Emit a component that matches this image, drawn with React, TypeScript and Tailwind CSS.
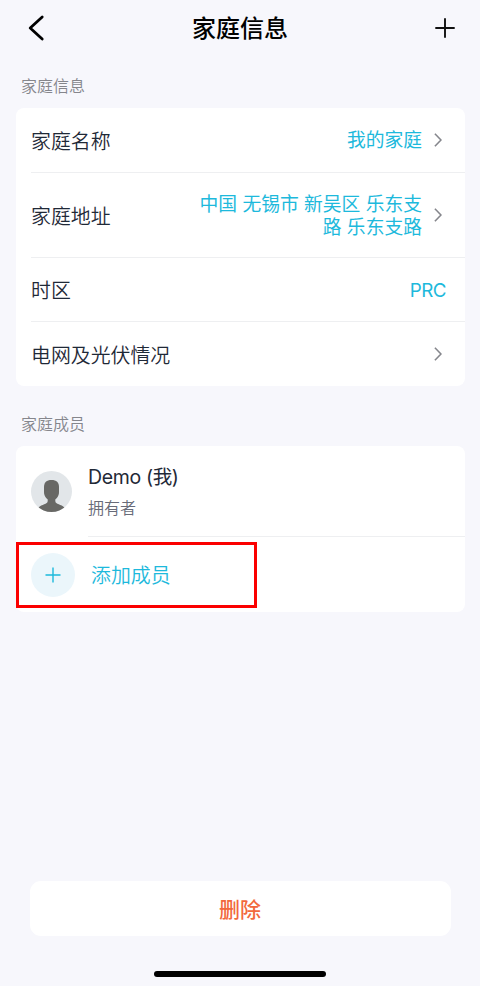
import React from 'react';

interface InfoRowProps {
  label: string;
  value?: string;
  arrow?: boolean;
  heightClass: string;
  last?: boolean;
}

const ChevronIcon = () => (
  <svg className="ml-3 shrink-0" width="8" height="14" viewBox="0 0 8 14" fill="none">
    <path d="M0.9 0.8L7 7L0.9 13.2" stroke="#85868c" strokeWidth="1.6" />
  </svg>
);

const AvatarIcon = () => (
  <svg className="shrink-0" width="41" height="41" viewBox="0 0 41 41">
    <defs>
      <clipPath id="avatar">
        <circle cx="20.5" cy="20.5" r="20.5" />
      </clipPath>
    </defs>
    <circle cx="20.5" cy="20.5" r="20.5" fill="#e2e6e9" />
    <g clipPath="url(#avatar)" fill="#686865">
      <path d="M20.5 9C25.5 9 28 11.5 28 16V21C28 25.500 24.800 29.500 20.500 29.500C16.200 29.500 13 25.500 13 21V16C13 11.500 15.500 9 20.500 9Z" />
      <path d="M16.700 25H24.300V30C24.300 33.500 30.500 33.200 33.500 36.500V41H7.500V36.500C10.500 33.200 16.700 33.500 16.700 30Z" />
    </g>
  </svg>
);

const SectionTitle = ({ children }: { children: React.ReactNode }) => (
  <h2 className="ml-[21px] text-base leading-6 font-[350] text-[#85868c]">{children}</h2>
);

const InfoRow = ({ label, value, arrow, heightClass, last }: InfoRowProps) => (
  <div
    className={`ml-[15px] flex items-center justify-between ${heightClass} ${last ? '' : 'border-b border-[#eeeff1]'}`}
  >
    <span className="pt-[5px] text-[19.9px] font-[350] text-[#1f2937]">{label}</span>
    <div className={`flex items-center ${arrow ? 'pr-[23px]' : 'pr-[19px] tracking-[-0.5px]'}`}>
      {value && (
        <span className="max-w-[232px] pt-[3px] text-right text-[18.8px] leading-[22.5px] text-[#1db9dc]">
          {value}
        </span>
      )}
      {arrow && <ChevronIcon />}
    </div>
  </div>
);

export default function App() {
  return (
    <div className="flex h-[986px] w-[480px] flex-col bg-[#f7f7fc] font-['Inter','Noto_Sans_CJK_SC',sans-serif]">
      <header className="flex h-14 shrink-0 items-center justify-between pr-[25px] pl-7">
        <button className="w-[17px]">
          <svg width="17" height="26" viewBox="0 0 17 26" fill="none">
            <path
              d="M14.2 2L2.2 13L14.2 24"
              stroke="#000"
              strokeWidth="2.8"
              strokeLinecap="round"
              strokeLinejoin="round"
            />
          </svg>
        </button>
        <h1 className="pt-0.5 text-2xl font-medium text-black">家庭信息</h1>
        <button>
          <svg width="20" height="20" viewBox="0 0 20 20" fill="none">
            <path d="M10 0.3V19.7M0.3 10H19.7" stroke="#111" strokeWidth="1.9" />
          </svg>
        </button>
      </header>

      <section className="mt-[18px]">
        <SectionTitle>家庭信息</SectionTitle>
        <div className="mt-2.5 mr-[15px] ml-4 rounded-lg bg-white">
          <InfoRow label="家庭名称" value="我的家庭" arrow heightClass="h-[65px]" />
          <InfoRow label="家庭地址" value="中国 无锡市 新吴区 乐东支路 乐东支路" arrow heightClass="h-[85px]" />
          <InfoRow label="时区" value="PRC" heightClass="h-16" />
          <InfoRow label="电网及光伏情况" arrow heightClass="h-16" last />
        </div>
      </section>

      <section className="mt-[26px]">
        <SectionTitle>家庭成员</SectionTitle>
        <div className="relative mt-2.5 mr-[15px] ml-4 rounded-lg bg-white">
          <div className="flex h-[91px] items-center pl-[15px]">
            <AvatarIcon />
            <div className="ml-4 flex h-full flex-1 flex-col border-b border-[#eeeff1] pt-4">
              <span className="text-[19.5px] leading-[30px] tracking-[-0.35px] text-[#1f2937]">Demo (我)</span>
              <span className="mt-1 text-base leading-6 font-[350] text-[#686b78]">拥有者</span>
            </div>
          </div>
          <button className="flex h-[75px] w-full items-center pl-[15px]">
            <span className="flex size-11 items-center justify-center rounded-full bg-[#ebf6fb]">
              <svg width="16" height="16" viewBox="0 0 16 16" fill="none">
                <path d="M8 0.5V15.5M0.5 8H15.5" stroke="#1db9dc" strokeWidth="1.4" />
              </svg>
            </span>
            <span className="ml-4 pt-[5px] text-[19.9px] font-[350] text-[#1db9dc]">添加成员</span>
          </button>
          {/* highlight around the add member action */}
          <div className="absolute top-24 left-0 h-[66px] w-[241px] border-3 border-[#fb0000]" />
        </div>
      </section>

      <footer className="mt-auto flex flex-col items-center pb-[9px]">
        <button className="h-[55px] w-[421px] rounded-[11px] bg-white pt-0.5 text-[21px] font-medium text-[#f2683d]">
          删除
        </button>
        <div className="mt-[35px] h-1.5 w-[172px] rounded-full bg-black" />
      </footer>
    </div>
  );
}
